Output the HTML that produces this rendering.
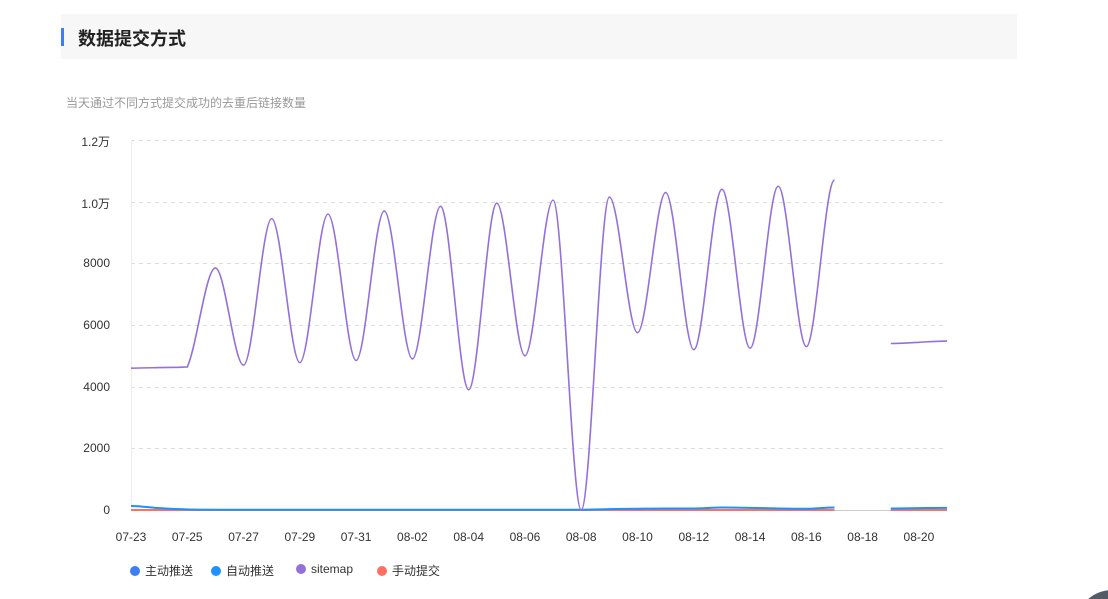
<!DOCTYPE html>
<html style="overflow:hidden"><head><meta charset="utf-8"><style>
html,body{margin:0;width:1108px;height:599px;overflow:hidden}
body{background:#fff;font-family:"Liberation Sans","Noto Sans CJK SC",sans-serif;position:relative}
.hd{position:absolute;left:61px;top:14px;width:956px;height:45px;background:#f7f7f7}
.bar{position:absolute;left:0;top:14px;width:3px;height:18px;background:#3b7ff0}
.hd span{position:absolute;left:17px;top:11px;font-size:18px;font-weight:bold;color:#222}
.sub{position:absolute;left:66px;top:94px;font-size:12px;color:#999}
.yl{position:absolute;right:998px;font-size:12px;color:#333}
.xl{position:absolute;top:530px;font-size:12px;color:#333;width:50px;text-align:center}
.lg{position:absolute;top:562px;font-size:12px;color:#333}
.lg i{display:inline-block;width:10px;height:10px;border-radius:50%;margin-right:5px;vertical-align:-1px}
</style></head><body>
<div class="hd"><div class="bar"></div><span>数据提交方式</span></div>
<div class="sub">当天通过不同方式提交成功的去重后链接数量</div>
<div class="yl" style="top:133px">1.2万</div>
<div class="yl" style="top:195px">1.0万</div>
<div class="yl" style="top:256px">8000</div>
<div class="yl" style="top:318px">6000</div>
<div class="yl" style="top:380px">4000</div>
<div class="yl" style="top:441px">2000</div>
<div class="yl" style="top:503px">0</div>
<svg id="s" width="1108" height="599" style="position:absolute;left:0;top:0">
<g stroke="#ddd" stroke-dasharray="4,4">
<line x1="131" x2="946" y1="140.5" y2="140.5"/><line x1="131" x2="946" y1="202.5" y2="202.5"/><line x1="131" x2="946" y1="263.5" y2="263.5"/><line x1="131" x2="946" y1="325.5" y2="325.5"/><line x1="131" x2="946" y1="387.5" y2="387.5"/><line x1="131" x2="946" y1="448.5" y2="448.5"/>
</g>
<line x1="131" x2="946" y1="510.5" y2="510.5" stroke="#ccc"/>
<line x1="131.5" x2="131.5" y1="140" y2="510" stroke="#eee"/>
<circle cx="1112" cy="626" r="36" fill="#555b66"/>
</svg>
<div id="xl"></div>
<div class="lg" style="left:130px"><i style="background:#3b7ff0"></i>主动推送</div>
<div class="lg" style="left:211px"><i style="background:#1e90ff"></i>自动推送</div>
<div class="lg" style="left:296px"><i style="background:#9370db"></i>sitemap</div>
<div class="lg" style="left:377px"><i style="background:#ff7060"></i>手动提交</div>
<script>
var X=function(i){return 131+i*28.14},Y=function(v){return 510-v*370/12000};
function path(d){var s="",seg=[];d.forEach(function(v,i){if(v==null){if(seg.length)s+=sp(seg);seg=[]}else seg.push([X(i),Y(v)])});if(seg.length)s+=sp(seg);return s}
function cl(v,a,b){var lo=Math.min(a,b),hi=Math.max(a,b);return Math.max(lo,Math.min(hi,v))}
function sp(p){var s="M"+p[0][0]+","+p[0][1];for(var i=0;i<p.length-1;i++){var p0=p[i-1]||p[i],p1=p[i],p2=p[i+1],p3=p[i+2]||p2,t=0.2;
var y1=cl(p1[1]+(p2[1]-p0[1])*t,p1[1],p2[1]),y2=cl(p2[1]-(p3[1]-p1[1])*t,p1[1],p2[1]);
if((p1[1]-p0[1])*(p2[1]-p1[1])<=0)y1=p1[1];if((p2[1]-p1[1])*(p3[1]-p2[1])<=0)y2=p2[1];
s+="C"+(p1[0]+9.4)+","+y1+" "+(p2[0]-9.4)+","+y2+" "+p2[0]+","+p2[1]}return s}
var pu=[4600,4620,4640,7850,4700,9450,4780,9600,4850,9700,4900,9850,3900,9950,5000,10050,0,10150,5750,10300,5200,10400,5250,10500,5300,10700,null,5400,5440,5480];
var bl=[130,60,20,10,10,10,10,10,10,10,10,10,10,10,10,10,10,30,40,50,50,80,70,50,40,80,null,50,60,70];
var or=[0,0,0,0,0,0,0,0,0,0,0,0,0,0,0,0,0,0,0,0,0,0,0,0,0,0,null,0,0,0];
var s=document.getElementById("s"),ns="http://www.w3.org/2000/svg";
[[or,"#ff7060"],[bl,"#1e90ff"],[pu,"#9370db"]].forEach(function(a){var e=document.createElementNS(ns,"path");e.setAttribute("d",path(a[0]));e.setAttribute("fill","none");e.setAttribute("stroke",a[1]);e.setAttribute("stroke-width",a[1]=="#9370db"?"1.6":"2");s.appendChild(e)});
var L=["07-23","07-25","07-27","07-29","07-31","08-02","08-04","08-06","08-08","08-10","08-12","08-14","08-16","08-18","08-20"],h="";
L.forEach(function(t,i){h+='<div class="xl" style="left:'+(X(i*2)-25)+'px">'+t+'</div>'});
document.getElementById("xl").innerHTML=h;
</script>
</body></html>
